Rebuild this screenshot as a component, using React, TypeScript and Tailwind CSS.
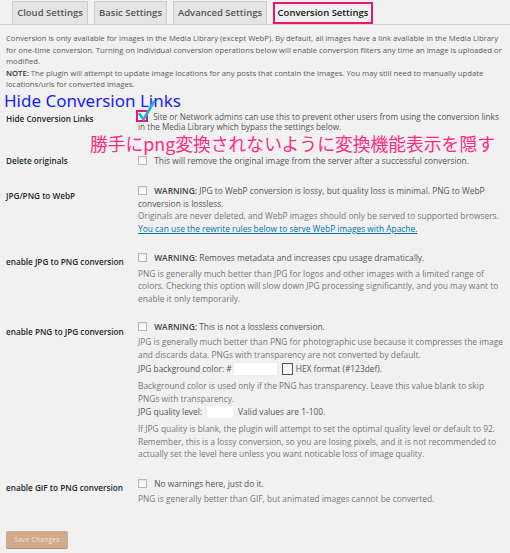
import React from 'react';

const tabs = [
  { name: 'Cloud Settings', w: 'w-[76px]' },
  { name: 'Basic Settings', w: 'w-[73px]' },
  { name: 'Advanced Settings', w: 'w-[94px]' },
];

function Box({ checked = false }: { checked?: boolean }) {
  if (checked) {
    return (
      <span className="relative inline-block w-[12px] h-[12px] border-2 border-[#f0146e] bg-[#fbfbfb] align-[-2px] ml-[-2px] mr-[3px]">
        <svg className="absolute left-[0px] top-[-12px] w-[18px] h-[22px]" viewBox="0 0 18 22" fill="none">
          <path d="M1.5 14 L5.5 19.5 L16 1.5" stroke="#1eaee8" strokeWidth="2.6" strokeLinecap="round" strokeLinejoin="round" />
        </svg>
      </span>
    );
  }
  return (
    <span className="inline-block w-[9px] h-[9px] border border-[#b4b9be] bg-[#fbfbfb] shadow-[inset_0_1px_2px_rgba(0,0,0,0.1)] align-[-1px] mr-[5px]" />
  );
}

function Label({ children, pt }: { children: React.ReactNode; pt: string }) {
  return (
    <div className={`w-[132px] shrink-0 text-[8.2px] leading-[12px] font-semibold text-[#23282d] ${pt}`}>
      {children}
    </div>
  );
}

export default function App() {
  return (
    <div className="w-[510px] h-[553px] overflow-hidden bg-[#f1f1f1] font-['Open_Sans',sans-serif]">
      {/* tabs */}
      <div className="flex items-end gap-[6px] pl-[12px] h-[25px] border-b border-[#cccccc]">
        {tabs.map((t) => (
          <div
            key={t.name}
            className={`${t.w} h-[23px] flex items-center justify-center border border-b-0 border-[#cccccc] bg-[#e4e4e4] text-[9.5px] font-semibold text-[#555555]`}
          >
            {t.name}
          </div>
        ))}
        <div className="w-[100px] h-[22px] mb-[-1px] self-start mt-[2px] flex items-center justify-center border-2 border-[#f0146e] bg-[#f1f1f1] text-[9.5px] font-semibold text-[#111111]">
          Conversion Settings
        </div>
      </div>

      <div className="px-[6px] pt-[8px] text-[7.7px] leading-[11.5px] text-[#5a5a5a]">
        <p>
          Conversion is only available for images in the Media Library (except WebP). By default, all images have a link available in the Media Library
          for one-time conversion. Turning on individual conversion operations below will enable conversion filters any time an image is uploaded or
          modified.
        </p>
        <p>
          <span className="font-semibold text-[#333]">NOTE:</span> The plugin will attempt to update image locations for any posts that contain the images. You may still need to manually update
          locations/urls for converted images.
        </p>
      </div>

      <div className="ml-[4px] text-[17px] leading-[19px] text-[#1a1aff] font-['Noto_Sans',sans-serif]">Hide Conversion Links</div>

      {/* Hide Conversion Links */}
      <div className="flex pl-[6px]">
        <Label pt="pt-[3px]">Hide Conversion Links</Label>
        <div className="flex-1 pr-[4px] text-[8.2px] leading-[10px] text-[#555]">
          <Box checked /> Site or Network admins can use this to prevent other users from using the conversion links in the Media Library which bypass the settings below.
        </div>
      </div>

      <div className="ml-[90px] mt-[2px] text-[17.8px] leading-[18px] text-[#ff2a7f] font-['Noto_Sans_CJK_JP',sans-serif]">
        勝手にpng変換されないように変換機能表示を隠す
      </div>

      {/* Delete originals */}
      <div className="flex pl-[6px] mt-[3px]">
        <Label pt="pt-[0.5px]">Delete originals</Label>
        <div className="flex-1 pr-[4px] text-[8.4px] leading-[12.5px] text-[#555]">
          <Box /> This will remove the original image from the server after a successful conversion.
        </div>
      </div>

      {/* WebP */}
      <div className="flex pl-[6px] mt-[18px]">
        <Label pt="pt-[5px]">JPG/PNG to WebP</Label>
        <div className="flex-1 pr-[4px] text-[8.4px] leading-[12.5px] text-[#555]">
          <p>
            <Box /> <span className="font-semibold text-[#444]">WARNING:</span> JPG to WebP conversion is lossy, but quality loss is minimal. PNG to WebP conversion is lossless.
          </p>
          <p className="text-[#777]">Originals are never deleted, and WebP images should only be served to supported browsers.</p>
          <p>
            <a className="text-[#0073aa] underline">You can use the rewrite rules below to serve WebP images with Apache.</a>
          </p>
        </div>
      </div>

      {/* JPG to PNG */}
      <div className="flex pl-[6px] mt-[17px]">
        <Label pt="pt-[4px]">enable JPG to PNG conversion</Label>
        <div className="flex-1 pr-[4px] text-[8.4px] leading-[12.5px] text-[#555]">
          <p>
            <Box /> <span className="font-semibold text-[#444]">WARNING:</span> Removes metadata and increases cpu usage dramatically.
          </p>
          <p className="mt-[3px] text-[#777]">
            PNG is generally much better than JPG for logos and other images with a limited range of colors. Checking this option will slow down JPG processing significantly, and you may want to enable it only temporarily.
          </p>
        </div>
      </div>

      {/* PNG to JPG */}
      <div className="flex pl-[6px] mt-[16px]">
        <Label pt="pt-[5px]">enable PNG to JPG conversion</Label>
        <div className="flex-1 pr-[4px] text-[8.4px] leading-[12.5px] text-[#555]">
          <p>
            <Box /> <span className="font-semibold text-[#444]">WARNING:</span> This is not a lossless conversion.
          </p>
          <p className="mt-[2.5px] text-[#777]">
            JPG is generally much better than PNG for photographic use because it compresses the image and discards data. PNGs with transparency are not converted by default.
          </p>
          <div className="mt-[1px] h-[14px] flex items-center">
            <span>JPG background color: #</span>
            <span className="ml-[1px] w-[45px] h-[14px] bg-white border border-[#eeeeee]" />
            <span className="ml-[4px] w-[11px] h-[12px] border border-[#555] bg-[#f6f6f6]" />
            <span className="ml-[3px]">HEX format (#123def).</span>
          </div>
          <p className="mt-[3px] leading-[13px] text-[#777]">
            Background color is used only if the PNG has transparency. Leave this value blank to skip PNGs with transparency.
          </p>
          <div className="h-[14px] flex items-center">
            <span>JPG quality level:</span>
            <span className="ml-[4px] w-[28px] h-[14px] bg-white border border-[#eeeeee]" />
            <span className="ml-[4px]">Valid values are 1-100.</span>
          </div>
          <p className="mt-[4px] text-[#777]">
            If JPG quality is blank, the plugin will attempt to set the optimal quality level or default to 92. Remember, this is a lossy conversion, so you are losing pixels, and it is not recommended to actually set the level here unless you want noticable loss of image quality.
          </p>
        </div>
      </div>

      {/* GIF to PNG */}
      <div className="flex pl-[6px] mt-[17px]">
        <Label pt="pt-[4px]">enable GIF to PNG conversion</Label>
        <div className="flex-1 pr-[4px] text-[8.4px] leading-[12.5px] text-[#555]">
          <p>
            <Box /> No warnings here, just do it.
          </p>
          <p className="mt-[2.5px] text-[#777]">PNG is generally better than GIF, but animated images cannot be converted.</p>
        </div>
      </div>

      <div className="flex pl-[6px] mt-[26px]">
        <button className="w-[62px] h-[17px] rounded-[2px] bg-[#d2a98b] shadow-[0_1px_0_#b98d6f] text-[6.5px] leading-[17px] text-[#f3e6dc] tracking-[0.3px]">
          Save Changes
        </button>
      </div>
    </div>
  );
}
